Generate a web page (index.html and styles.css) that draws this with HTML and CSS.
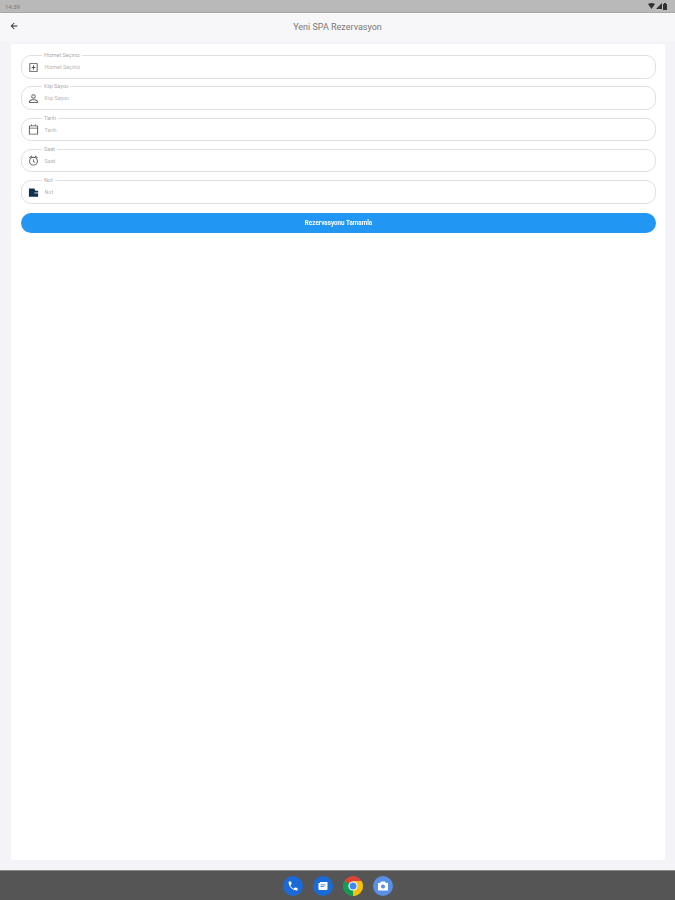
FILE: index.html
```html
<!DOCTYPE html>
<html lang="tr">
<head>
    <meta charset="UTF-8">
    <meta name="viewport" content="width=device-width, initial-scale=1.0">
    <title>Yeni SPA Rezervasyon</title>
    <link rel="stylesheet" href="styles.css">
</head>
<body>
    <div class="status-bar">
        <span class="clock">14:39</span>
        <div class="status-icons">
            <svg width="7" height="6" viewBox="0 0 14 12"><path d="M0 2 Q7 -2 14 2 L7 12 Z" fill="#333"/></svg>
            <svg width="6" height="6" viewBox="0 0 12 12"><path d="M12 0 V12 H0 Z" fill="#333"/></svg>
            <svg width="4" height="7" viewBox="0 0 8 14"><path d="M2 2 V0 H6 V2 H8 V14 H0 V2 Z" fill="#333"/></svg>
        </div>
    </div>

    <header class="app-bar">
        <svg class="back" width="10" height="10" viewBox="0 0 24 24"><path d="M20 11H7.800l5.600-5.600L12 4l-8 8 8 8 1.400-1.400L7.800 13H20z" fill="#222"/></svg>
        <h1>Yeni SPA Rezervasyon</h1>
    </header>

    <main class="page">
        <form class="card">
            <fieldset class="field">
                <legend>Hizmet Seçiniz</legend>
                <svg class="field-icon" viewBox="0 0 24 24"><path d="M5 2h14a2 2 0 0 1 2 2v16a2 2 0 0 1-2 2H5a2 2 0 0 1-2-2V4a2 2 0 0 1 2-2zm0 2v16h14V4zm6 3h2v4h3v2h-3v4h-2v-4H8v-2h3z" fill="#555"/></svg>
                <span class="placeholder">Hizmet Seçiniz</span>
            </fieldset>
            <fieldset class="field">
                <legend>Kişi Sayısı</legend>
                <svg class="field-icon" viewBox="0 0 24 24"><path d="M12 2.500a5 5 0 1 1 0 10 5 5 0 0 1 0-10zm0 2.200a2.800 2.800 0 1 0 0 5.600 2.800 2.800 0 0 0 0-5.600zM12 13.500c3.800 0 10 1.800 10 5.500v3H2v-3c0-3.700 6.200-5.500 10-5.500zm0 2.200c-3.300 0-7.500 1.300-7.800 3.300v.8h15.600V19c-.3-2-4.500-3.300-7.800-3.300z" fill="#666"/></svg>
                <span class="placeholder">Kişi Sayısı</span>
            </fieldset>
            <fieldset class="field">
                <legend>Tarih</legend>
                <svg class="field-icon" viewBox="0 0 24 24"><path d="M7 1h2v2h6V1h2v2h3a2 2 0 0 1 2 2v16a2 2 0 0 1-2 2H4a2 2 0 0 1-2-2V5a2 2 0 0 1 2-2h3zM4 10v11h16V10zm0-5v3h16V5z" fill="#555"/></svg>
                <span class="placeholder">Tarih</span>
            </fieldset>
            <fieldset class="field">
                <legend>Saat</legend>
                <svg class="field-icon" viewBox="0 0 24 24"><path d="M7.900 1 9.200 2.500 3.500 7.300 2.200 5.800zm8.200 0 5.700 4.800-1.300 1.500-5.700-4.800zM12 4a9.500 9.500 0 1 1 0 19 9.500 9.500 0 0 1 0-19zm0 2a7.500 7.500 0 1 0 0 15 7.500 7.500 0 0 0 0-15zm-1 3h1.700v4.800l3.500 2-.8 1.300-4.400-2.600z" fill="#555"/></svg>
                <span class="placeholder">Saat</span>
            </fieldset>
            <fieldset class="field">
                <legend>Not</legend>
                <svg class="field-icon" viewBox="0 0 24 24"><path d="M2 3h12l2 5h6v13H2z" fill="#12304f"/><path d="M14 12h8v2h-8z" fill="#dfe6ee"/></svg>
                <span class="placeholder">Not</span>
            </fieldset>
            <button type="button" class="submit">Rezervasyonu Tamamla</button>
        </form>
    </main>

    <nav class="nav-bar">
        <div class="app app-phone">
            <svg width="12" height="12" viewBox="0 0 24 24"><path d="M6.600 10.800a15 15 0 0 0 6.600 6.600l2.200-2.200a1 1 0 0 1 1-.25 11 11 0 0 0 3.600.6 1 1 0 0 1 1 1V20a1 1 0 0 1-1 1A17 17 0 0 1 3 4a1 1 0 0 1 1-1h3.500a1 1 0 0 1 1 1c0 1.300.2 2.500.6 3.600a1 1 0 0 1-.25 1z" fill="#fff"/></svg>
        </div>
        <div class="app app-msg">
            <svg width="12" height="12" viewBox="0 0 24 24"><path d="M3 6h3V4h15v14a2 2 0 0 1-2 2H5a2 2 0 0 1-2-2z" fill="#fff"/><path d="M7 9h10v1.500H7zm0 3.500h7V14H7z" fill="#1a6ad8"/></svg>
        </div>
        <div class="app app-chrome">
            <svg width="20" height="20" viewBox="0 0 20 20">
                <circle cx="10" cy="10" r="10" fill="#db4437"/>
                <path d="M10 10 1.340 5A10 10 0 0 0 10 20l5-8.660z" fill="#0f9d58"/>
                <path d="M10 10 10 20A10 10 0 0 0 18.660 5H10z" fill="#f4c20d"/>
                <circle cx="10" cy="10" r="4.600" fill="#fff"/>
                <circle cx="10" cy="10" r="3.500" fill="#4285f4"/>
            </svg>
        </div>
        <div class="app app-camera">
            <svg width="12" height="12" viewBox="0 0 24 24"><path d="M8 3h8l2 3h4v15H2V6h4z" fill="#fff"/><circle cx="12" cy="13" r="4" fill="#5a8fe6"/></svg>
        </div>
    </nav>
</body>
</html>
```

FILE: styles.css
```css
* {
    box-sizing: border-box;
}
html, body {
    height: 100%;
}
body {
    margin: 0;
    display: flex;
    flex-direction: column;
    background-color: #f3f3f8;
    font-family: Roboto, "Noto Sans", sans-serif;
    color: #444;
    filter: blur(0.5px);
}
.status-bar {
    height: 13px;
    flex: none;
    display: flex;
    align-items: center;
    justify-content: space-between;
    padding: 0 8px 0 5px;
    background-color: #b9b9b9;
    border-bottom: 1px solid #a9a9a9;
}
.clock {
    font-size: 6px;
    color: #777;
}
.status-icons {
    display: flex;
    align-items: center;
    gap: 1px;
}
.app-bar {
    height: 28px;
    flex: none;
    display: flex;
    align-items: center;
    justify-content: center;
    position: relative;
    background-color: #f7f7f9;
}
.app-bar h1 {
    margin: 0;
    font-size: 9px;
    font-weight: 400;
    color: #777;
}
.back {
    position: absolute;
    left: 9px;
    top: 8px;
}
.page {
    flex: 1;
    padding: 3px 10px 10px 11px;
}
.card {
    height: 100%;
    display: flex;
    flex-direction: column;
    gap: 8px;
    padding: 9px 9px 9px 10px;
    background: white;
    border-radius: 3px;
}
.field {
    height: 25.6px;
    margin: 0 0 -2.3px;
    padding: 3.5px 0 0 6px;
    display: flex;
    align-items: center;
    gap: 5.5px;
    border: 1.3px solid #e0e0e0;
    border-radius: 10px;
    min-width: 0;
}
.field legend {
    margin-left: 14px;
    padding: 0 2px;
    font-size: 5.4px;
    line-height: 5px;
    color: #aaa;
}
.field-icon {
    width: 11px;
    height: 11px;
    flex: none;
}
.placeholder {
    font-size: 5.4px;
    color: #b5b5b5;
}
.submit {
    height: 20px;
    margin-top: 4px;
    border: none;
    border-radius: 10px;
    background-color: #2196f3;
    color: white;
    font-family: inherit;
    font-size: 6.3px;
    font-weight: 700;
}
.nav-bar {
    height: 30px;
    flex: none;
    display: flex;
    align-items: center;
    justify-content: center;
    gap: 10px;
    background-color: #555;
    border-top: 1px solid #8a8a8a;
}
.app {
    width: 20px;
    height: 20px;
    display: flex;
    align-items: center;
    justify-content: center;
    border-radius: 50%;
}
.app-phone, .app-msg {
    background-color: #1a6ad8;
}
.app-camera {
    background-color: #5a8fe6;
}
```
